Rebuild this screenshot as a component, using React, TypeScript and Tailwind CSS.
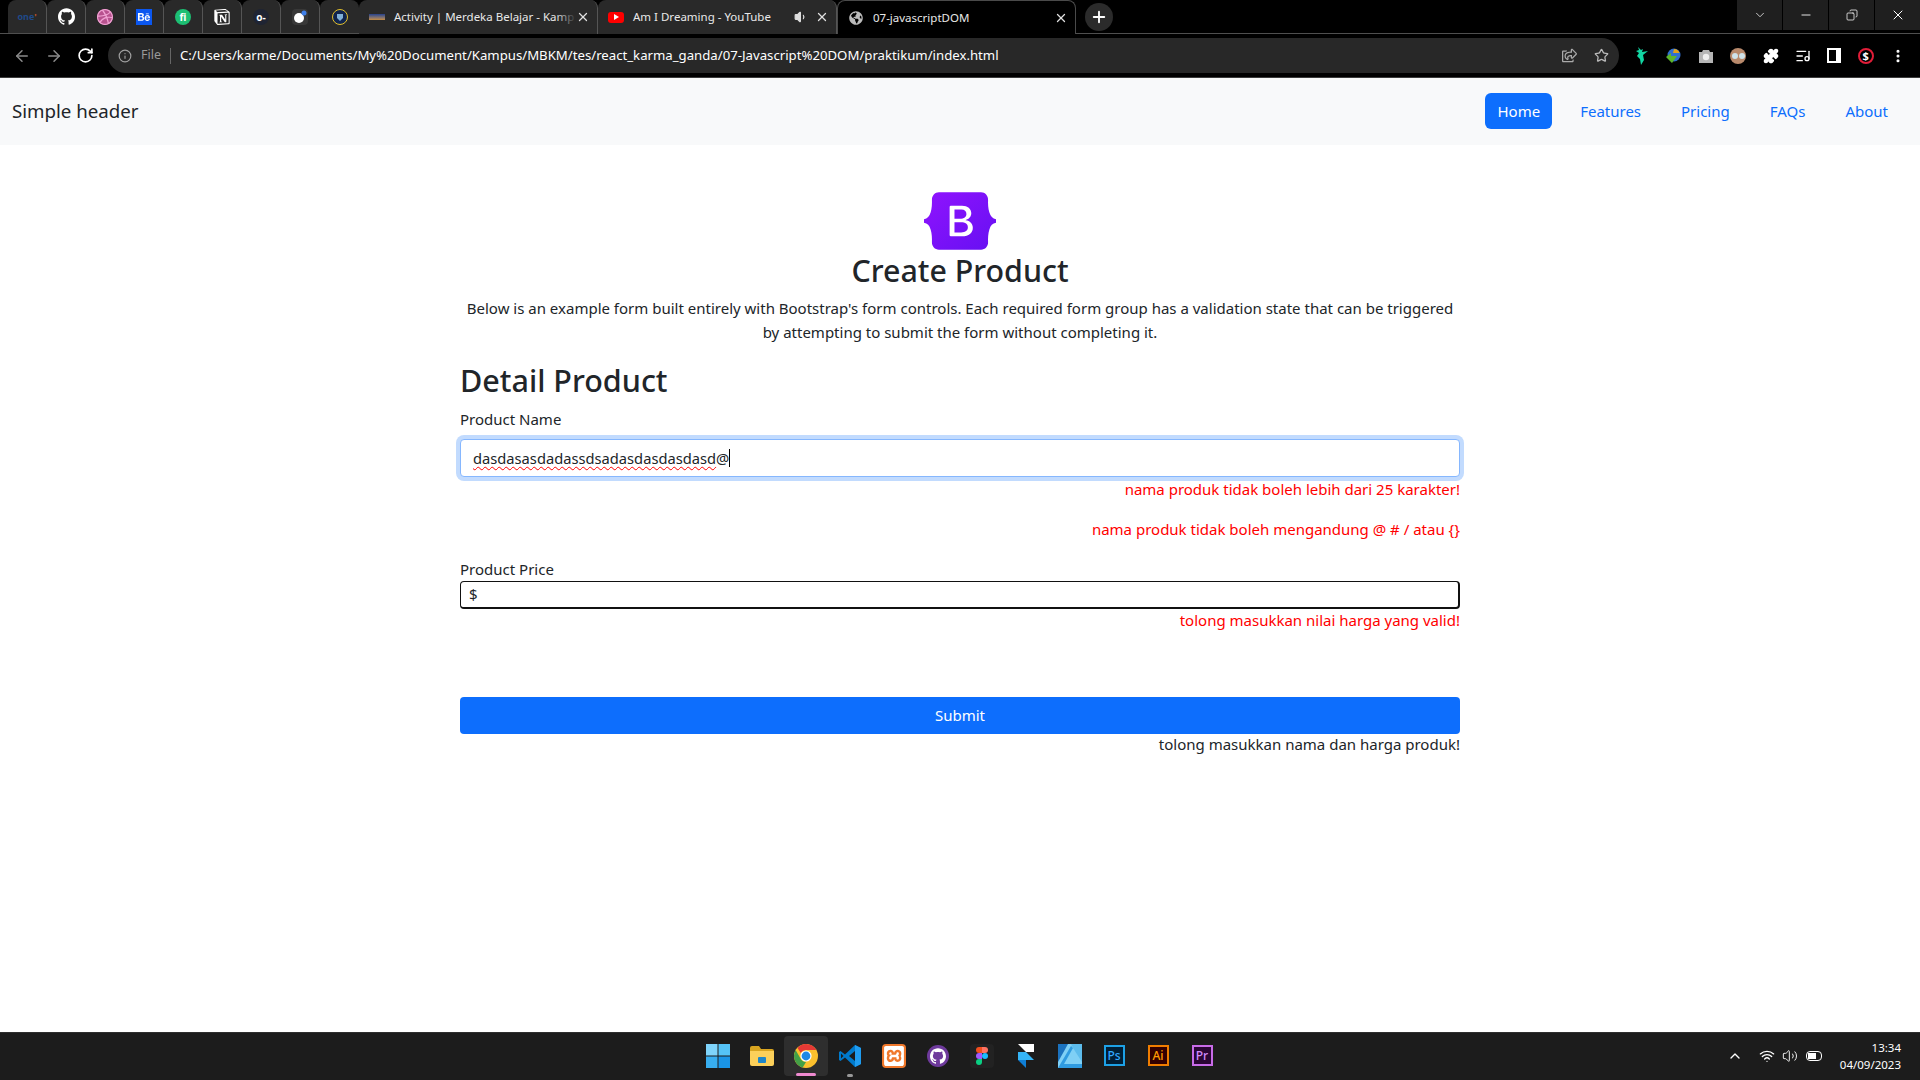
import React from 'react';
import {
  ArrowLeft,
  ArrowRight,
  ChevronDown,
  ChevronUp,
  Copy,
  Info,
  ListMusic,
  Minus,
  MoreVertical,
  Plus,
  Puzzle,
  RotateCw,
  Star,
  Volume1,
  Volume2,
  Wifi,
  X,
} from 'lucide-react';
import { FaGlobeAmericas, FaRegShareSquare } from 'react-icons/fa';
import {
  SiBehance,
  SiDribbble,
  SiGithub,
  SiNotion,
  SiXampp,
} from 'react-icons/si';

// pinned tabs, left to right
const pinnedTabs: React.ReactNode[] = [
  <span key="one" className="text-[9px] font-bold text-[#1f4a8a] leading-none">
    one<span className="text-[#c0532a]">'</span>
  </span>,
  <SiGithub key="gh" className="w-[17px] h-[17px] text-white" />,
  <span key="dr" className="w-4 h-4 rounded-full bg-[#b8528f] flex items-center justify-center">
    <SiDribbble className="w-4 h-4 text-[#f0a3d3]" />
  </span>,
  <span key="be" className="w-4 h-4 bg-[#0b57f0] flex items-center justify-center">
    <SiBehance className="w-3 h-3 text-white" />
  </span>,
  <span key="fi" className="w-4 h-4 rounded-full bg-[#1dbf73] flex items-center justify-center text-white text-[10px] font-bold leading-none">
    fi
  </span>,
  <SiNotion key="no" className="w-4 h-4 text-white" />,
  <span key="ke" className="w-4 h-4 rounded-full bg-[#1f2433] flex items-center justify-center text-white text-[10px] font-bold leading-none">
    o-
  </span>,
  <span key="mo" className="w-4 h-4 rounded-sm bg-[#383838] flex items-center justify-center">
    <svg viewBox="0 0 16 16" className="w-4 h-4">
      <circle cx="7" cy="9" r="5" fill="#fff" />
      <circle cx="12" cy="4" r="2.5" fill="#3f7fe8" />
    </svg>
  </span>,
  <svg key="un" viewBox="0 0 16 16" className="w-4 h-4">
    <circle cx="8" cy="8" r="7.5" fill="#10244d" stroke="#e3c02b" />
    <path d="M5 5h6v4l-3 3-3-3z" fill="#7fb0d8" />
  </svg>,
];

const Tab = ({ icon, title, extra, active, fade }: { icon: React.ReactNode; title: string; extra?: React.ReactNode; active?: boolean; fade?: boolean }) => (
  <div
    className={
      'w-[239px] h-[34px] flex items-center pl-[10px] pr-[7px] rounded-t-lg shrink-0 ' +
      (active ? 'bg-black border border-b-0 border-[#4a4a4a]' : 'bg-[#292929] border-r border-[#555]')
    }
  >
    <span className="w-4 h-4 flex items-center justify-center shrink-0 mr-[9px]">{icon}</span>
    <span className="text-[11.5px] text-[#e8e8e8] whitespace-nowrap flex-1 relative">
      {title}
      {fade && <span className="absolute right-0 top-0 bottom-0 w-5 bg-gradient-to-r from-transparent to-[#292929]" />}
    </span>
    {extra}
    <X className="w-[14px] h-[14px] text-[#e0e0e0] shrink-0" strokeWidth={2.2} />
  </div>
);

const TabStrip = () => (
  <div className="h-[34px] bg-black flex items-start pl-[8px] border-b border-[#4f4f4f] relative">
    <div className="flex">
      {pinnedTabs.map((icon, i) => (
        <div key={i} className={'w-[39px] h-[33px] bg-[#292929] rounded-t-lg flex items-center justify-center shrink-0 ' + (i < 8 ? 'border-r border-[#555]' : '')}>
          {icon}
        </div>
      ))}
    </div>
    <Tab
      title="Activity | Merdeka Belajar - Kamp"
      fade
      icon={<span className="w-4 h-[6px] bg-gradient-to-b from-[#27408b] to-[#c48a3c] block" />}
    />
    <Tab
      title="Am I Dreaming - YouTube"
      icon={
        <span className="w-4 h-[11px] rounded-[3px] bg-[#f00] flex items-center justify-center">
          <span className="w-0 h-0 border-y-[3px] border-y-transparent border-l-[5px] border-l-white" />
        </span>
      }
      extra={<Volume1 className="w-[14px] h-[14px] text-[#ddd] mr-[7px] shrink-0" fill="#ddd" />}
    />
    <Tab title="07-javascriptDOM" active icon={<FaGlobeAmericas className="w-[14px] h-[14px] text-[#bbb]" />} />
    <div className="w-7 h-7 ml-[9px] mt-[3px] rounded-full bg-[#2b2b2b] flex items-center justify-center">
      <Plus className="w-[18px] h-[18px] text-white" strokeWidth={2.5} />
    </div>
    <div className="flex ml-auto h-[30px]">
      <div className="w-[45px] bg-[#1f1f1f] mr-px flex items-center justify-center"><ChevronDown className="w-[14px] h-[14px] text-[#ddd]" strokeWidth={1.5} /></div>
      <div className="w-[45px] bg-[#1f1f1f] mr-px flex items-center justify-center"><Minus className="w-[14px] h-[14px] text-white" strokeWidth={1.5} /></div>
      <div className="w-[45px] bg-[#1f1f1f] mr-px flex items-center justify-center"><Copy className="w-3 h-3 text-white -scale-x-100" strokeWidth={1.5} /></div>
      <div className="w-[45px] bg-[#1f1f1f] flex items-center justify-center"><X className="w-4 h-4 text-white" strokeWidth={1.5} /></div>
    </div>
  </div>
);

const Toolbar = () => (
  <div className="h-[44px] bg-black border-b border-[#3c3c3c] flex items-center pl-[13px] pr-[14px]">
    <ArrowLeft className="w-[18px] h-[18px] text-[#8a8a8a]" />
    <ArrowRight className="w-[18px] h-[18px] text-[#8a8a8a] ml-[14px]" />
    <RotateCw className="w-[17px] h-[17px] text-white ml-[14px]" strokeWidth={2.4} />
    <div className="w-[1511px] h-[35px] ml-[14px] bg-[#282828] rounded-full flex items-center pl-[10px] pr-[10px]">
      <Info className="w-[14px] h-[14px] text-[#a0a0a0]" />
      <span className="text-[12.5px] text-[#9a9a9a] ml-[9px]">File</span>
      <span className="w-px h-4 bg-[#666] ml-[9px]" />
      <span className="text-[13.2px] text-white ml-[9px] whitespace-nowrap">
        C:/Users/karme/Documents/My%20Document/Kampus/MBKM/tes/react_karma_ganda/07-Javascript%20DOM/praktikum/index.html
      </span>
      <FaRegShareSquare className="w-[15px] h-[15px] text-[#aaa] ml-auto" />
      <Star className="w-[15px] h-[15px] text-[#bbb] ml-[17px]" />
    </div>
    <div className="flex items-center flex-1 justify-between pl-[14px]">
      <svg viewBox="0 0 16 18" className="w-4 h-[18px]">
        <path d="M5 0l3 3 2-1-1 3 6-1-5 4 1 5-3 5-1-6-3-3 2-3-3-2 3-1z" fill="#12d6a3" />
      </svg>
      <svg viewBox="0 0 16 16" className="w-4 h-4">
        <circle cx="9" cy="7" r="6.5" fill="#2f6fd0" />
        <path d="M9 1a6 6 0 015.6 4H8z" fill="#e2a317" />
        <path d="M1 9l5-4v3h6L7 15z" fill="#5db52c" />
      </svg>
      <svg viewBox="0 0 16 16" className="w-4 h-4">
        <path d="M1 4h3l1-2h6l1 2h3v11H1z" fill="#b5b5b5" />
        <circle cx="8" cy="9" r="3.2" fill="#eee" />
      </svg>
      <span className="w-4 h-4 rounded-full bg-[#b98a6c] flex items-center justify-center gap-px"><span className="w-[6px] h-[6px] rounded-full bg-[#cfe3ea]" /><span className="w-[6px] h-[6px] rounded-full bg-[#cfe3ea]" /></span>
      <Puzzle className="w-4 h-4 text-white" fill="#fff" />
      <ListMusic className="w-4 h-4 text-white" />
      <span className="w-[14px] h-[15px] border-2 border-white border-r-[5px]" />
      <span className="w-4 h-4 rounded-full border-2 border-[#e11d38] flex items-center justify-center text-[11px] font-bold text-white leading-none">$</span>
      <MoreVertical className="w-4 h-4 text-white" strokeWidth={2.6} />
    </div>
  </div>
);

const Navbar = () => (
  <nav className="h-[67px] bg-[#f8f9fa] flex items-center justify-between pl-3 pr-5 pb-px">
    <span className="text-[18.7px] text-[#212529]">Simple header</span>
    <ul className="flex gap-4 text-[15px]">
      <li className="h-9 px-3 flex items-center rounded-md bg-[#0d6efd] text-white">Home</li>
      {['Features', 'Pricing', 'FAQs', 'About'].map((n) => (
        <li key={n} className="h-9 px-3 flex items-center text-[#0d6efd]">{n}</li>
      ))}
    </ul>
  </nav>
);

const BootstrapLogo = () => (
  <svg viewBox="0 0 118 94" className="w-[72px] h-[58px]">
    <defs>
      <linearGradient id="bs" x1="0" y1="0" x2="1" y2="1">
        <stop offset="0" stopColor="#9013fe" />
        <stop offset="1" stopColor="#6610f2" />
      </linearGradient>
    </defs>
    <path
      fill="url(#bs)"
      fillRule="evenodd"
      d="M24.509 0c-6.733 0-11.715 5.893-11.492 12.284.214 6.14-.064 14.092-2.066 20.577C8.943 39.365 5.547 43.485 0 44.014v5.972c5.547.529 8.943 4.649 10.951 11.153 2.002 6.485 2.28 14.437 2.066 20.577C12.794 88.106 17.776 94 24.51 94H93.5c6.733 0 11.714-5.893 11.491-12.284-.214-6.14.064-14.092 2.066-20.577 2.009-6.504 5.396-10.624 10.943-11.153v-5.972c-5.547-.529-8.934-4.649-10.943-11.153-2.002-6.484-2.28-14.437-2.066-20.577C105.214 5.894 100.233 0 93.5 0H24.508zM80 57.863C80 66.663 73.436 72 62.543 72H44a2 2 0 01-2-2V24a2 2 0 012-2h18.437c9.083 0 15.044 4.92 15.044 12.474 0 5.302-4.01 10.049-9.119 10.88v.277C75.317 46.394 80 51.21 80 57.863zM60.521 28.34H49.948v14.934h8.905c6.884 0 10.68-2.772 10.68-7.727 0-4.643-3.264-7.207-8.012-7.207zM49.948 49.2v16.458H60.91c7.167 0 10.964-2.876 10.964-8.281 0-5.406-3.903-8.178-11.425-8.178H49.948z"
    />
  </svg>
);

const ProductForm = () => (
  <main className="flex-1 bg-white">
    <div className="w-[1000px] mx-auto pt-[47px] text-[#212529]">
      <div className="flex flex-col items-center text-center">
        <BootstrapLogo />
        <h2 className="text-[30.4px] leading-[38px] font-medium mt-[2px]">Create Product</h2>
        <p className="text-[15px] leading-6 mt-[6px] w-[1000px]">
          Below is an example form built entirely with Bootstrap's form controls. Each required form group has a validation state that can be triggered by attempting to submit the form without completing it.
        </p>
      </div>
      <h3 className="text-[30.5px] leading-[38px] font-medium mt-[17px]">Detail Product</h3>
      <label className="block text-[15px] leading-6 mt-[8px]">Product Name</label>
      <div className="h-[38px] mt-[8px] rounded border border-[#86b7fe] ring-4 ring-[#c2dbfe] bg-white flex items-center px-3 text-[14.7px]">
        <span className="underline decoration-wavy decoration-[#f00] underline-offset-2 decoration-1">dasdasasdadassdsadasdasdasdasd</span>
        <span>@</span>
        <span className="w-px h-[18px] bg-black" />
      </div>
      <p className="text-[15px] leading-6 text-right text-[#ff0000]">nama produk tidak boleh lebih dari 25 karakter!</p>
      <p className="text-[15px] leading-6 text-right text-[#ff0000] mt-[16px]">nama produk tidak boleh mengandung @ # / atau {'{}'}</p>
      <label className="block text-[15px] leading-6 mt-[16px]">Product Price</label>
      <div className="h-[28px] rounded-sm border border-r-2 border-b-2 border-[#111] bg-white flex items-center px-2 text-[15px]">$</div>
      <p className="text-[15px] leading-6 text-right text-[#ff0000] -mt-px">tolong masukkan nilai harga yang valid!</p>
      <button className="block w-full h-[37px] mt-[65px] rounded bg-[#0d6efd] text-white text-[15px]">Submit</button>
      <p className="text-[15px] leading-6 text-right -mt-[2px]">tolong masukkan nama dan harga produk!</p>
    </div>
  </main>
);

const WindowsLogo = () => (
  <svg viewBox="0 0 24 24" className="w-6 h-6">
    <rect x="0" y="0" width="11.5" height="11.5" fill="#7fd4fb" />
    <rect x="12.5" y="0" width="11.5" height="11.5" fill="#55c3f7" />
    <rect x="0" y="12.5" width="11.5" height="11.5" fill="#38aef0" />
    <rect x="12.5" y="12.5" width="11.5" height="11.5" fill="#1a94e6" />
  </svg>
);

const FolderIcon = () => (
  <svg viewBox="0 0 24 20" className="w-6 h-[22px]">
    <path d="M0 2a2 2 0 012-2h7l2 3h11a2 2 0 012 2v3H0z" fill="#d9a520" />
    <path d="M0 5h24v13a2 2 0 01-2 2H2a2 2 0 01-2-2z" fill="#fcd05a" />
    <rect x="8" y="11" width="8" height="6" rx="1" fill="#1f86c9" />
  </svg>
);

const ChromeIcon = () => (
  <svg viewBox="0 0 24 24" className="w-6 h-6">
    <circle cx="12" cy="12" r="12" fill="#fbc02d" />
    <path d="M12 0a12 12 0 0110.39 6H12a6 6 0 00-5.2 3L3.5 3.9A12 12 0 0112 0z" fill="#e53935" />
    <path d="M1.6 6l5.2 9A6 6 0 0012 18l-3.3 5.5A12 12 0 011.6 6z" fill="#43a047" />
    <circle cx="12" cy="12" r="5.6" fill="#fff" />
    <circle cx="12" cy="12" r="4.4" fill="#1e88e5" />
  </svg>
);

const VsCodeIcon = () => (
  <svg viewBox="0 0 24 24" className="w-6 h-6">
    <path d="M17 1l6 3v16l-6 3L7 13.5 2.5 17 1 16v-8l1.5-1L7 10.5z" fill="#007acc" />
    <path d="M17 7l-6 5 6 5z" fill="#1c1c1c" />
    <path d="M3 9.5v5l2.5-2.5z" fill="#1c1c1c" />
    <path d="M17 1l6 3v16l-6 3z" fill="#1f9cf0" />
  </svg>
);

const AffinityIcon = () => (
  <svg viewBox="0 0 24 24" className="w-6 h-6">
    <rect width="24" height="24" fill="#7fd0f5" />
    <path d="M0 0h10L0 18z" fill="#1b72be" />
    <path d="M0 24L13 2l2 2L6 20h18v4z" fill="#2f9be0" />
    <path d="M15 4l9 14V0H13z" fill="#5dbcec" />
  </svg>
);

const AdobeIcon = ({ label, border, bg }: { label: string; border: string; bg: string }) => (
  <span className={'w-[21px] h-[21px] border-2 text-[12px] leading-none font-medium flex items-center justify-center ' + border + ' ' + bg}>{label}</span>
);

const FigmaColor = () => (
  <svg viewBox="0 0 12 18" className="w-3 h-[18px]">
    <path d="M3 0h3v6H3a3 3 0 010-6z" fill="#f24e1e" />
    <path d="M6 0h3a3 3 0 010 6H6z" fill="#ff7262" />
    <path d="M3 6h3v6H3a3 3 0 010-6z" fill="#a259ff" />
    <circle cx="9" cy="9" r="3" fill="#1abcfe" />
    <path d="M3 12h3v3a3 3 0 11-3-3z" fill="#0acf83" />
  </svg>
);

const FramerColor = () => (
  <svg viewBox="0 0 16 24" className="w-4 h-6">
    <path d="M0 0h16v8H8z" fill="#fff" />
    <path d="M0 8h8l8 8H0z" fill="#35b4f5" />
    <path d="M0 16h8v8z" fill="#0f7fd6" />
  </svg>
);

const BatteryIcon = () => (
  <span className="w-4 h-[10px] rounded-sm border border-white flex items-center p-px mr-px">
    <span className="w-2 h-full bg-white" />
  </span>
);

const TaskItem = ({ children, active, dot }: { children: React.ReactNode; active?: boolean; dot?: boolean }) => (
  <div className={'w-[44px] h-10 flex items-center justify-center relative rounded ' + (active ? 'bg-[#2e2e2e]' : '')}>
    {children}
    {active && <span className="absolute bottom-0 left-[12px] w-5 h-[3px] rounded-full bg-[#ef8ad0]" />}
    {dot && <span className="absolute -bottom-px left-[19px] w-[6px] h-[3px] rounded-full bg-[#999]" />}
  </div>
);

const Taskbar = () => (
  <footer className="h-12 shrink-0 bg-[#1c1c1c] border-t border-[#2e2e2e] flex items-center relative">
    <div className="flex items-center ml-[696px] h-full pb-[2px]">
      <TaskItem><WindowsLogo /></TaskItem>
      <TaskItem><FolderIcon /></TaskItem>
      <TaskItem active><ChromeIcon /></TaskItem>
      <TaskItem dot><VsCodeIcon /></TaskItem>
      <TaskItem>
        <span className="w-6 h-6 rounded-sm bg-[#f0782b] flex items-center justify-center"><SiXampp className="w-5 h-5 text-white" /></span>
      </TaskItem>
      <TaskItem>
        <span className="w-[22px] h-[22px] rounded-full bg-[#6e3a9c] flex items-center justify-center"><SiGithub className="w-4 h-4 text-white" /></span>
      </TaskItem>
      <TaskItem>
        <span className="w-6 h-6 rounded-sm bg-[#222] flex items-center justify-center"><FigmaColor /></span>
      </TaskItem>
      <TaskItem><FramerColor /></TaskItem>
      <TaskItem><AffinityIcon /></TaskItem>
      <TaskItem><AdobeIcon label="Ps" border="border-[#1da1e6]" bg="bg-[#001e36] text-[#31a8ff]" /></TaskItem>
      <TaskItem><AdobeIcon label="Ai" border="border-[#f07d00]" bg="bg-[#330000] text-[#ff9a00]" /></TaskItem>
      <TaskItem><AdobeIcon label="Pr" border="border-[#c86be8]" bg="bg-[#2a0634] text-[#d38bff]" /></TaskItem>
    </div>
    <div className="ml-auto flex items-center text-white pr-[19px] pb-[2px]">
      <ChevronUp className="w-4 h-4 mr-[16px]" strokeWidth={2} />
      <Wifi className="w-4 h-4 mr-[7px]" />
      <Volume2 className="w-4 h-4 mr-[8px]" strokeWidth={1.4} />
      <BatteryIcon />
      <div className="flex flex-col items-end text-[11.5px] leading-[17px] ml-[17px]">
        <span>13:34</span>
        <span>04/09/2023</span>
      </div>
    </div>
  </footer>
);

export default function App() {
  return (
    <div className="w-[1920px] h-[1080px] flex flex-col overflow-hidden font-['Noto_Sans',sans-serif]">
      <TabStrip />
      <Toolbar />
      <Navbar />
      <ProductForm />
      <Taskbar />
    </div>
  );
}
